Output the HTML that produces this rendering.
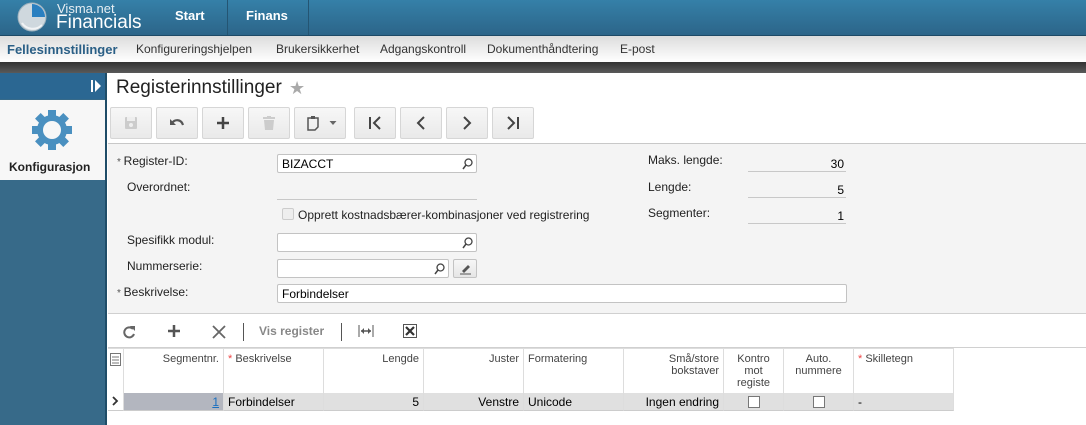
<!DOCTYPE html>
<html><head><meta charset="utf-8"><style>
*{box-sizing:border-box;margin:0;padding:0}
body{width:1086px;height:425px;overflow:hidden;font-family:"Liberation Sans",Arial,sans-serif;font-size:12px;color:#000;background:#fff;position:relative}
.abs{position:absolute}
#top{left:0;top:0;width:1086px;height:36px;background:linear-gradient(#3580a8,#2c6589);border-bottom:1px solid #1d4a66}
#sub{left:0;top:36px;width:1086px;height:26px;background:linear-gradient(#dcdcdc,#fff)}
#sub span{position:absolute;top:6px;font-size:12px;color:#333}
#dark{left:0;top:62px;width:1086px;height:11px;background:linear-gradient(#333,#5a5a5a)}
#side{left:0;top:73px;width:107px;height:352px;background:#376a89;border-right:2px solid #1f4d68}
.btn{position:absolute;top:107px;height:32px;width:42px;border:1px solid #d6d6d6;border-radius:2px;background:linear-gradient(#f7f7f7,#e9e9e9)}
.btn svg{position:absolute;left:50%;top:50%;transform:translate(-50%,-50%)}
#form{left:108px;top:143px;width:978px;height:170px;background:#f4f4f4;border-top:1px solid #c8c8c8}
.lbl{position:absolute;font-size:12px;color:#222}
.inp{position:absolute;height:19px;background:#fff;border:1px solid #c3c3c3;border-radius:2px;font-size:12px;padding:2px 4px}
.mag{position:absolute;right:3px;top:3px}
.ro{position:absolute;border-bottom:1px solid #c8c8c8;text-align:right;font-size:12px;padding-right:2px;height:18px;padding-top:3px}
.star{color:#555;font-size:10px}
#gtb{left:108px;top:313px;width:978px;height:35px;border-top:1px solid #d0d0d0;border-bottom:1px solid #d0d0d0;background:#fff}
.th,.td{position:absolute;border-right:1px solid #ddd;font-size:11px;color:#444;padding:4px 4px}
.th{top:349px;height:44px;background:#fff}
.td{top:393px;height:18px;background:#e0e0e0;font-size:12px;color:#000;padding:2px 4px;border-bottom:1px solid #ccc}
.r{text-align:right}
.chk{display:inline-block;width:12px;height:12px;border:1px solid #777;background:#fff}
</style></head><body>
<div id="top" class="abs">
 <svg class="abs" style="left:16px;top:1px" width="32" height="32"><circle cx="16" cy="16" r="14" fill="#cfd8de"/><circle cx="16" cy="16" r="14" fill="none" stroke="#9fb2be"/><path d="M16 16 L16 3 A13 13 0 0 1 29 16 Z" fill="#2a7fc0"/><path d="M6 22 A13 13 0 0 0 26 24" stroke="#fff" stroke-width="2" fill="none" opacity=".7"/></svg>
 <div class="abs" style="left:57px;top:1px;color:#e6eef3;font-size:13px">Visma.net</div>
 <div class="abs" style="left:56px;top:12px;color:#fff;font-size:19px">Financials</div>
 <div class="abs" style="left:175px;top:8px;color:#fff;font-weight:bold;font-size:13px">Start</div>
 <div class="abs" style="left:227px;top:0;width:1px;height:35px;background:#245573"></div>
 <div class="abs" style="left:246px;top:8px;color:#fff;font-weight:bold;font-size:13px">Finans</div>
 <div class="abs" style="left:308px;top:0;width:1px;height:35px;background:#245573"></div>
</div>
<div id="sub" class="abs">
 <span style="left:7px;font-weight:bold;color:#2a5f86;font-size:13px">Fellesinnstillinger</span>
 <span style="left:136px">Konfigureringshjelpen</span>
 <span style="left:276px">Brukersikkerhet</span>
 <span style="left:380px">Adgangskontroll</span>
 <span style="left:487px">Dokumenthåndtering</span>
 <span style="left:620px">E-post</span>
</div>
<div id="dark" class="abs"></div>
<div id="side" class="abs">
 <div class="abs" style="left:0;top:0;width:105px;height:26px;background:#2b6792"></div>
 <svg class="abs" style="left:91px;top:7px" width="10" height="12"><rect x="0" y="0" width="2" height="12" fill="#fff"/><path d="M4 0 L10 6 L4 12Z" fill="#fff"/></svg>
 <div class="abs" style="left:0;top:27px;width:105px;height:80px;background:#f7f7f7"></div>
 <svg class="abs" style="left:30px;top:35px" width="44" height="44" viewBox="0 0 44 44"><g fill="#4a90c0"><circle cx="22" cy="22" r="15"/><rect x="18" y="2" width="8" height="8"/><rect x="18" y="34" width="8" height="8"/><rect x="2" y="18" width="8" height="8"/><rect x="34" y="18" width="8" height="8"/><g transform="rotate(45 22 22)"><rect x="18" y="2" width="8" height="8"/><rect x="18" y="34" width="8" height="8"/><rect x="2" y="18" width="8" height="8"/><rect x="34" y="18" width="8" height="8"/></g></g><circle cx="22" cy="22" r="9" fill="#f7f7f7"/></svg>
 <div class="abs" style="left:9px;top:87px;font-weight:bold;font-size:12px;color:#222">Konfigurasjon</div>
</div>
<div class="abs" style="left:116px;top:77px;font-size:19px;color:#222">Registerinnstillinger</div>
<div class="abs" style="left:289px;top:78px;font-size:18px;color:#aaa">★</div>
<div class="btn" style="left:110px"><svg width="14" height="14"><rect x="1" y="1" width="12" height="12" rx="1" fill="#ccc"/><rect x="3" y="1" width="8" height="4" fill="#eee"/><circle cx="7" cy="9" r="2" fill="#eee"/></svg></div>
<div class="btn" style="left:156px"><svg width="16" height="12"><path d="M3 6 C6 2 12 2 14 8" stroke="#555" stroke-width="2.2" fill="none"/><path d="M1 2 L1 8 L7 8Z" fill="#555"/></svg></div>
<div class="btn" style="left:202px"><svg width="14" height="14"><path d="M7 1V13M1 7H13" stroke="#444" stroke-width="2.5"/></svg></div>
<div class="btn" style="left:248px"><svg width="12" height="14"><rect x="0" y="1" width="12" height="2" fill="#ccc"/><rect x="4" y="0" width="4" height="2" fill="#ccc"/><path d="M1 4H11L10 14H2Z" fill="#ccc"/></svg></div>
<div class="btn" style="left:294px;width:52px"><svg style="left:18px" width="12" height="16"><path d="M1 3H11V12L8 15H1Z" stroke="#555" stroke-width="1.5" fill="none"/><rect x="4" y="1" width="4" height="3" fill="#555"/></svg><svg style="left:38px" width="7" height="4"><path d="M0 0H7L3.5 4Z" fill="#666"/></svg></div>
<div class="btn" style="left:354px"><svg width="14" height="14"><path d="M2 1V13" stroke="#444" stroke-width="2"/><path d="M12 1L6 7L12 13" stroke="#444" stroke-width="2" fill="none"/></svg></div>
<div class="btn" style="left:400px"><svg width="10" height="14"><path d="M8 1L2 7L8 13" stroke="#444" stroke-width="2" fill="none"/></svg></div>
<div class="btn" style="left:446px"><svg width="10" height="14"><path d="M2 1L8 7L2 13" stroke="#444" stroke-width="2" fill="none"/></svg></div>
<div class="btn" style="left:492px"><svg width="14" height="14"><path d="M12 1V13" stroke="#444" stroke-width="2"/><path d="M2 1L8 7L2 13" stroke="#444" stroke-width="2" fill="none"/></svg></div>

<div id="form" class="abs"></div>
<div class="lbl" style="left:117px;top:154px"><span class="star">* </span>Register-ID:</div>
<div class="lbl" style="left:127px;top:180px">Overordnet:</div>
<div class="lbl" style="left:127px;top:233px">Spesifikk modul:</div>
<div class="lbl" style="left:127px;top:259px">Nummerserie:</div>
<div class="lbl" style="left:117px;top:285px"><span class="star">* </span>Beskrivelse:</div>
<div class="inp" style="left:277px;top:154px;width:200px">BIZACCT<svg class="mag" width="11" height="12"><circle cx="6.5" cy="4.5" r="3.5" stroke="#444" stroke-width="1.3" fill="none"/><path d="M4 7L1 11" stroke="#444" stroke-width="1.5"/></svg></div>
<div class="abs" style="left:277px;top:199px;width:200px;height:1px;background:#c8c8c8"></div>
<div class="abs" style="left:282px;top:208px;width:12px;height:12px;border:1px solid #ccc;border-radius:2px;background:#eee"></div>
<div class="lbl" style="left:298px;top:208px">Opprett kostnadsbærer-kombinasjoner ved registrering</div>
<div class="inp" style="left:277px;top:233px;width:200px"><svg class="mag" width="11" height="12"><circle cx="6.5" cy="4.5" r="3.5" stroke="#444" stroke-width="1.3" fill="none"/><path d="M4 7L1 11" stroke="#444" stroke-width="1.5"/></svg></div>
<div class="inp" style="left:277px;top:259px;width:172px"><svg class="mag" width="11" height="12"><circle cx="6.5" cy="4.5" r="3.5" stroke="#444" stroke-width="1.3" fill="none"/><path d="M4 7L1 11" stroke="#444" stroke-width="1.5"/></svg></div>
<div class="inp" style="left:453px;top:259px;width:24px;background:linear-gradient(#f7f7f7,#e6e6e6)"><svg class="abs" style="left:5px;top:3px" width="13" height="12"><path d="M3 8L9 2L11 4L5 10Z" fill="#555"/><path d="M1 11H12" stroke="#555"/></svg></div>
<div class="inp" style="left:277px;top:284px;width:570px">Forbindelser</div>
<div class="lbl" style="left:648px;top:153px">Maks. lengde:</div>
<div class="lbl" style="left:648px;top:180px">Lengde:</div>
<div class="lbl" style="left:648px;top:206px">Segmenter:</div>
<div class="ro" style="left:748px;top:154px;width:98px">30</div>
<div class="ro" style="left:748px;top:180px;width:98px">5</div>
<div class="ro" style="left:748px;top:206px;width:98px">1</div>

<div id="gtb" class="abs">
 <svg class="abs" style="left:14px;top:11px" width="14" height="14"><path d="M11 4A5 5 0 1 0 12 9" stroke="#666" stroke-width="2" fill="none"/><path d="M8 1H13V6Z" fill="#666"/></svg>
 <svg class="abs" style="left:59px;top:10px" width="14" height="14"><path d="M7 1V13M1 7H13" stroke="#555" stroke-width="2.5"/></svg>
 <svg class="abs" style="left:104px;top:11px" width="14" height="14"><path d="M1 1L13 13M13 1L1 13" stroke="#666" stroke-width="1.8"/></svg>
 <div class="abs" style="left:135px;top:9px;width:1px;height:18px;background:#555"></div>
 <div class="abs" style="left:151px;top:10px;color:#888;font-weight:bold;font-size:12px">Vis register</div>
 <div class="abs" style="left:233px;top:9px;width:1px;height:18px;background:#555"></div>
 <svg class="abs" style="left:250px;top:11px" width="16" height="12"><path d="M1 0V12M15 0V12" stroke="#555"/><path d="M3 6H13" stroke="#555" stroke-width="1.5"/><path d="M3 6L6 3V9ZM13 6L10 3V9Z" fill="#555"/></svg>
 <svg class="abs" style="left:295px;top:10px" width="14" height="14"><rect x=".5" y=".5" width="13" height="13" fill="#fff" stroke="#555"/><path d="M3 3L11 11M11 3L3 11" stroke="#333" stroke-width="2.2"/></svg>
</div>
<div class="th" style="left:108px;width:16px;padding:4px 2px"><svg width="11" height="13"><rect x=".5" y=".5" width="10" height="12" fill="none" stroke="#777"/><path d="M2 4H9M2 7H9M2 10H9" stroke="#777"/></svg></div>
<div class="th r" style="left:124px;width:100px">Segmentnr.</div>
<div class="th" style="left:224px;width:100px"><span style="color:#e44">* </span>Beskrivelse</div>
<div class="th r" style="left:324px;width:100px">Lengde</div>
<div class="th r" style="left:424px;width:100px">Juster</div>
<div class="th" style="left:524px;width:100px">Formatering</div>
<div class="th r" style="left:624px;width:100px">Små/store bokstaver</div>
<div class="th" style="left:724px;width:60px;text-align:center;line-height:12px;padding:4px 2px">Kontro<br>mot<br>registe</div>
<div class="th" style="left:784px;width:70px;text-align:center;line-height:12px;overflow:hidden;white-space:nowrap">Auto.<br>nummere</div>
<div class="th" style="left:854px;width:100px"><span style="color:#e44">* </span>Skilletegn</div>
<div class="abs" style="left:108px;top:348px;width:846px;height:1px;background:#ddd"></div>
<div class="td" style="left:108px;width:16px;background:#fff;padding:2px 3px"><svg width="8" height="10"><path d="M2 1L6 5L2 9" stroke="#333" stroke-width="1.8" fill="none"/></svg></div>
<div class="td r" style="left:124px;width:100px;background:#b3b6bf"><span style="color:#1a6fc0;text-decoration:underline">1</span></div>
<div class="td" style="left:224px;width:100px">Forbindelser</div>
<div class="td r" style="left:324px;width:100px">5</div>
<div class="td r" style="left:424px;width:100px">Venstre</div>
<div class="td" style="left:524px;width:100px">Unicode</div>
<div class="td r" style="left:624px;width:100px">Ingen endring</div>
<div class="td" style="left:724px;width:60px;text-align:center;padding-top:3px"><span class="chk"></span></div>
<div class="td" style="left:784px;width:70px;text-align:center;padding-top:3px"><span class="chk"></span></div>
<div class="td" style="left:854px;width:100px">-</div>
</body></html>
